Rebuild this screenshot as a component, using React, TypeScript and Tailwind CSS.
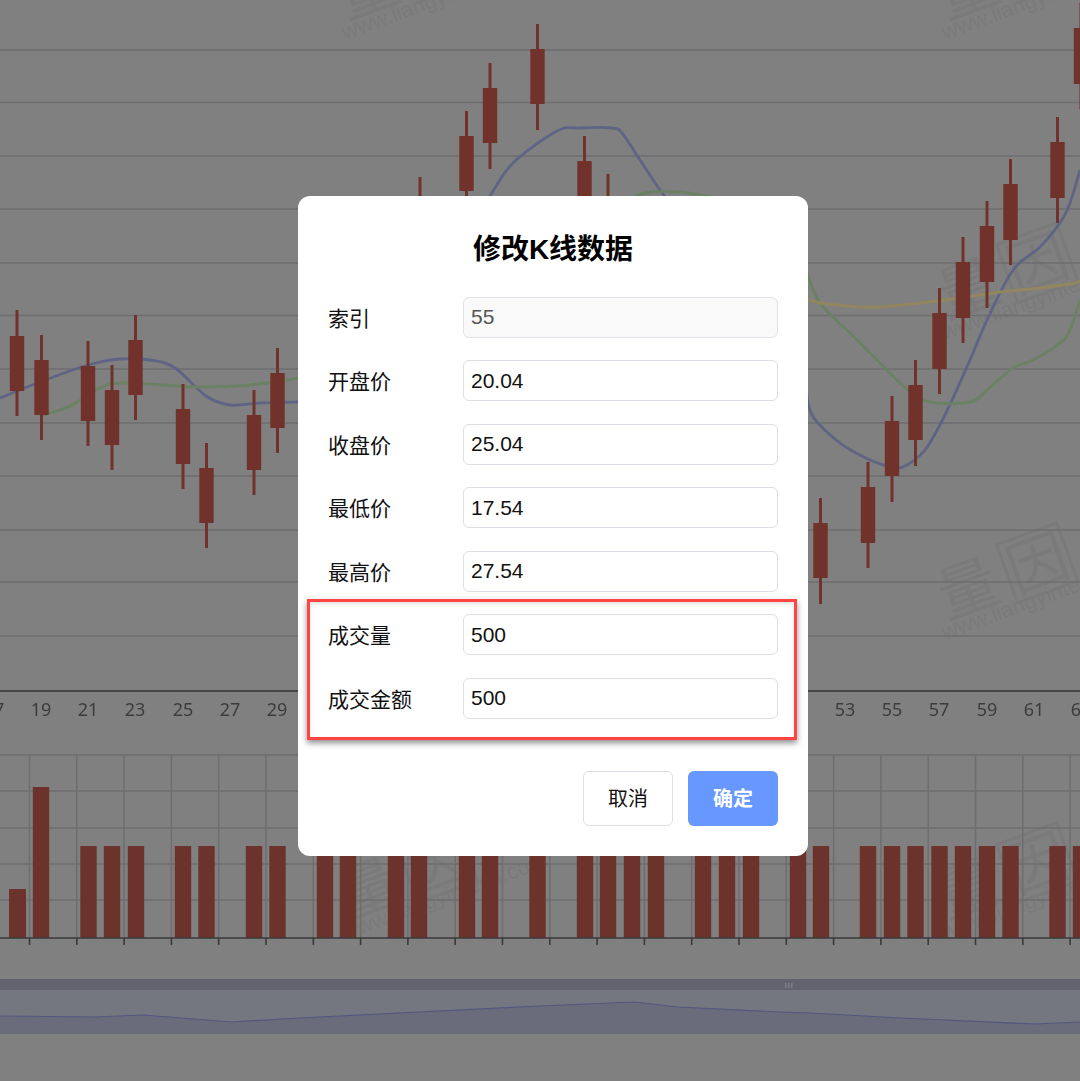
import React from 'react';

const CJK = "font-['Liberation_Sans','Noto_Sans_CJK_SC',sans-serif]";

const fields = [
  { label: '索引', value: '55', disabled: true },
  { label: '开盘价', value: '20.04' },
  { label: '收盘价', value: '25.04' },
  { label: '最低价', value: '17.54' },
  { label: '最高价', value: '27.54' },
  { label: '成交量', value: '500' },
  { label: '成交金额', value: '500' },
];

// x, body top, body bottom, wick top, wick bottom
const candles = [
  [17, 336, 391, 310, 416], [41.5, 360, 415, 335, 440], [88, 366, 421, 341, 446],
  [112, 390, 445, 365, 470], [135.5, 340, 395, 315, 420], [183, 409, 464, 384, 489],
  [206.5, 468, 523, 443, 548], [254, 415, 470, 390, 495], [277.5, 373, 428, 348, 453],
  [420, 202, 258, 177, 283], [466.5, 136, 191, 111, 216], [490, 88, 143, 63, 169],
  [537.5, 49, 104, 24, 130], [584.5, 161, 217, 136, 242], [608, 199, 255, 174, 280],
  [820.5, 523, 578, 498, 604], [868, 487, 543, 462, 568], [892, 421, 476, 396, 502],
  [915.5, 385, 440, 360, 466], [939.5, 313, 369, 288, 394], [963, 262, 318, 237, 343],
  [987, 226, 282, 201, 308], [1010.5, 184, 240, 159, 265], [1057.5, 142, 198, 117, 223],
  [1081, 28, 84, 3, 109],
];

const bars = [
  41, 88.5, 112, 136, 183, 206.5, 254, 277.5, 325, 348, 396, 419, 467, 490, 537.5,
  585, 608, 632, 656, 703, 727, 751, 798, 821, 868, 892, 915.5, 939.5, 963, 987,
  1010.5, 1057.5, 1081,
];

const priceGrid = [50, 102.5, 156, 209, 263, 315.5, 369, 423, 476, 530, 582, 636];
const volumeGrid = [755, 791, 828, 864, 900];
const volumeTicks = Array.from({ length: 23 }, (_, i) => 29.5 + i * 47.3);

const axisLabels: [string, number][] = [
  ['17', -6], ['19', 41], ['21', 88], ['23', 135], ['25', 183], ['27', 230], ['29', 277],
  ['53', 845], ['55', 892], ['57', 939], ['59', 987], ['61', 1034], ['63', 1081],
];

const watermarks: [number, number][] = [
  [345, 40], [945, 40], [945, 340], [945, 640], [345, 940], [945, 940],
];

const blueLeft = [[0, 398], [40, 382], [88, 365], [120, 359], [150, 360], [175, 368], [206, 396], [230, 405], [260, 403], [300, 402]];
const blueTop = [[480, 210], [490, 196], [513, 163], [557, 131], [580, 128], [612, 128], [622, 133], [640, 160], [660, 190], [680, 215]];
const blueRight = [[806, 385], [812, 415], [840, 443], [870, 460], [892, 467], [905, 466], [925, 450], [945, 415], [970, 360], [987, 320], [1013, 270], [1040, 247], [1060, 223], [1070, 203], [1080, 170]];
const greenLeft = [[40, 416], [70, 406], [100, 388], [125, 383], [200, 387], [250, 385], [300, 378]];
const greenTop = [[630, 200], [645, 193], [680, 192], [710, 197], [730, 203]];
const greenRight = [[806, 270], [820, 303], [850, 333], [877, 360], [908, 390], [930, 402], [970, 402], [987, 390], [1013, 368], [1033, 360], [1060, 343], [1070, 330], [1080, 300]];
const yellowRight = [[806, 298], [820, 303], [860, 307], [880, 307], [920, 303], [960, 298], [1000, 292], [1040, 288], [1070, 284], [1080, 281]];

// catmull-rom through the points, good enough for the moving averages
function smooth(pts: number[][]) {
  let d = `M${pts[0][0]} ${pts[0][1]}`;
  for (let i = 0; i < pts.length - 1; i++) {
    const p0 = pts[i - 1] || pts[i];
    const p1 = pts[i];
    const p2 = pts[i + 1];
    const p3 = pts[i + 2] || p2;
    const c1x = p1[0] + (p2[0] - p0[0]) / 6;
    const c1y = p1[1] + (p2[1] - p0[1]) / 6;
    const c2x = p2[0] - (p3[0] - p1[0]) / 6;
    const c2y = p2[1] - (p3[1] - p1[1]) / 6;
    d += ` C${c1x} ${c1y} ${c2x} ${c2y} ${p2[0]} ${p2[1]}`;
  }
  return d;
}

function Chart() {
  const sliderLine = '0,1016 95,1017 143,1015 232,1022 300,1018 540,1006 635,1002 678,1007 780,1012 810,1013 900,1018 1035,1024 1080,1022';
  return (
    <svg width="1080" height="1081" viewBox="0 0 1080 1081" className="block blur-[0.5px]">
      {watermarks.map(([x, y]) => (
        <g key={`${x}-${y}`} transform={`translate(${x} ${y}) rotate(-20)`} fill="#7a7a7b">
          <text x="9" y="-19" fontSize="60" fontFamily="'Noto Sans CJK SC',sans-serif">量</text>
          <text x="83" y="-19" fontSize="60" fontFamily="'Noto Sans CJK SC',sans-serif">因</text>
          <rect x="81" y="-72" width="64" height="62" fill="none" stroke="#7a7a7b" strokeWidth="3" />
          <text x="0" y="0" fontSize="22" fontFamily="'Liberation Sans',sans-serif">www.liangyintech.com</text>
        </g>
      ))}

      {priceGrid.map((y) => (
        <line key={y} x1="0" x2="1080" y1={y} y2={y} stroke="#6e6e71" strokeWidth="1.5" />
      ))}

      {volumeGrid.map((y) => (
        <line key={y} x1="0" x2="1080" y1={y} y2={y} stroke="#6e6e70" strokeWidth="1.5" />
      ))}
      {volumeTicks.map((x) => (
        <line key={x} x1={x} x2={x} y1="755" y2="938" stroke="#6e6e70" strokeWidth="1.5" />
      ))}

      {[blueLeft, blueTop, blueRight].map((pts, i) => (
        <path key={i} d={smooth(pts)} fill="none" stroke="#5f6485" strokeWidth="2.8" />
      ))}
      {[greenLeft, greenTop, greenRight].map((pts, i) => (
        <path key={i} d={smooth(pts)} fill="none" stroke="#6a8263" strokeWidth="3" />
      ))}
      <path d={smooth(yellowRight)} fill="none" stroke="#92865f" strokeWidth="3" />

      {candles.map(([x, top, bottom, wickTop, wickBottom]) => (
        <g key={x} fill="#70322b">
          <rect x={x - 1.5} y={wickTop} width="3" height={wickBottom - wickTop} />
          <rect x={x - 7.2} y={top} width="14.4" height={bottom - top} />
        </g>
      ))}

      <rect x="9" y="889" width="17" height="49" fill="#6c332d" />
      {bars.map((x) => (
        <rect key={x} x={x - 8.2} y={x === 41 ? 787 : 846} width="16.4" height={x === 41 ? 151 : 92} fill="#6c332d" />
      ))}

      <line x1="0" x2="1080" y1="691" y2="691" stroke="#303030" strokeWidth="1.6" />
      <line x1="0" x2="1080" y1="938" y2="938" stroke="#3a3a3a" strokeWidth="1.6" />
      {volumeTicks.map((x) => (
        <line key={x} x1={x} x2={x} y1="938" y2="945" stroke="#3a3a3a" strokeWidth="1.6" />
      ))}

      {axisLabels.map(([label, x]) => (
        <text key={label} x={x} y="716" textAnchor="middle" fontSize="18" fill="#3c3c3c" fontFamily="'Noto Sans',sans-serif">
          {label}
        </text>
      ))}

      <rect x="0" y="979" width="1080" height="11" fill="#62636f" />
      <rect x="0" y="990" width="1080" height="44" fill="#6b6c7b" />
      <polygon points={`0,990 1080,990 1080,1022 ${sliderLine.split(' ').reverse().join(' ')} 0,990`} fill="#747680" />
      <polyline points={sliderLine} fill="none" stroke="#535780" strokeWidth="1.2" />
      <g fill="#7c7d88">
        <rect x="785" y="983" width="1.6" height="5" />
        <rect x="788" y="983" width="1.6" height="5" />
        <rect x="791" y="983" width="1.6" height="5" />
      </g>
    </svg>
  );
}

export default function App() {
  return (
    <div className="relative h-[1081px] w-[1080px] overflow-hidden bg-[#808080]">
      <Chart />
      <div className="absolute inset-0 flex items-start pl-[298px] pt-[196px]">
        <div className={`relative flex h-[660px] w-[510px] flex-col rounded-xl bg-white px-[30px] pt-[30px] ${CJK}`}>
          <h2 className="mb-[22.9px] h-[48px] text-center text-[28px] font-bold leading-[48px] text-black">修改K线数据</h2>

          <div className="flex flex-col gap-[22.5px]">
            {fields.map((field) => (
              <div key={field.label} className="flex h-[41px] items-center">
                <label className="w-[135px] pt-[2px] text-[21px] text-[#111]">{field.label}</label>
                <input
                  readOnly
                  disabled={field.disabled}
                  value={field.value}
                  className={
                    field.disabled
                      ? 'h-[41px] w-[315px] rounded-md border border-[#e2e2e8] bg-[#f9f9f9] pl-[7px] text-[21px] text-[#555] opacity-100'
                      : 'h-[41px] w-[315px] rounded-md border border-[#dedee6] bg-white pl-[7px] text-[21px] text-[#111]'
                  }
                />
              </div>
            ))}
          </div>

          <div className="mt-[52.1px] flex justify-end gap-[15px]">
            <button className="h-[55px] w-[90px] rounded-md border border-[#dedee6] bg-white pt-[1px] text-[20px] text-[#111]">取消</button>
            <button className="h-[55px] w-[90px] rounded-md bg-[#6698ff] pt-[1px] text-[20px] font-bold text-white">确定</button>
          </div>

          <div className="absolute left-[9px] top-[403px] h-[141px] w-[490px] border-[3px] border-[#ff4444] shadow-[0_3px_6px_rgba(0,0,0,0.45),inset_0_2px_4px_rgba(0,0,0,0.12)]" />
        </div>
      </div>
    </div>
  );
}
